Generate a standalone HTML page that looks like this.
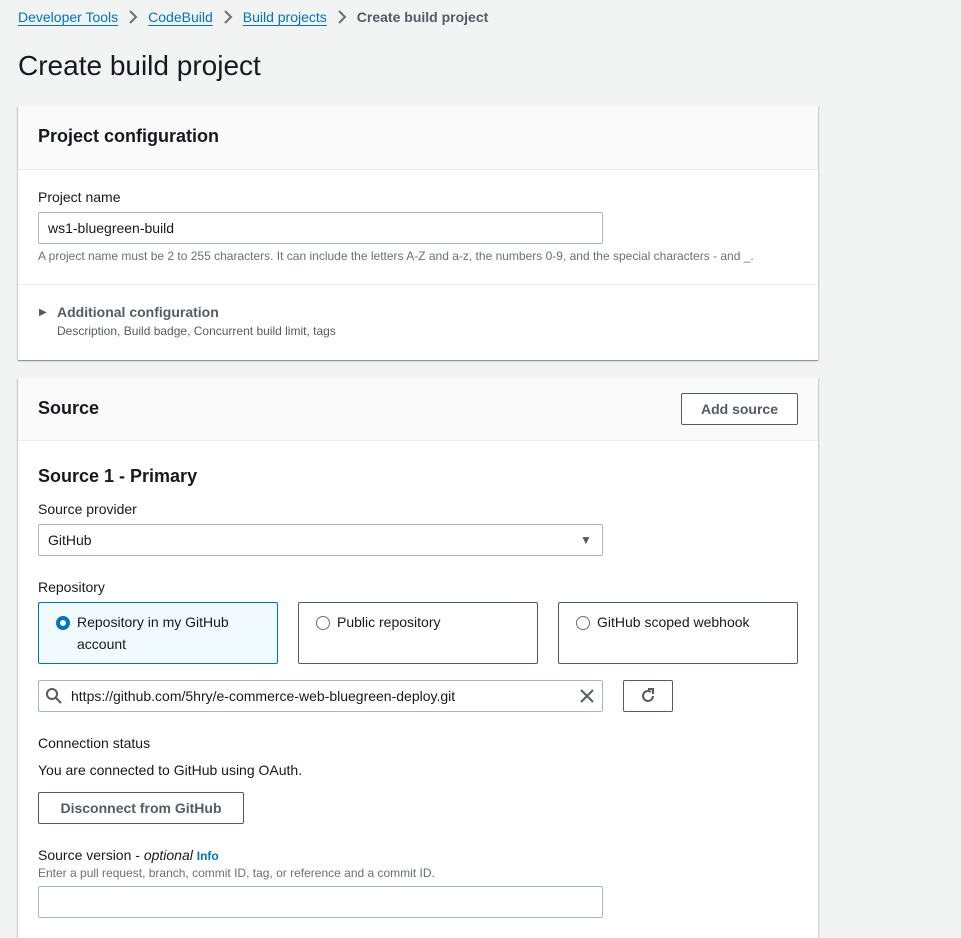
<!DOCTYPE html>
<html><head><style>
*{box-sizing:border-box;margin:0;padding:0}
body{width:961px;height:920px;overflow:hidden;background:#f2f3f3;font-family:"Liberation Sans",sans-serif;color:#16191f;position:relative;font-size:14px}
.a{position:absolute;white-space:nowrap}
.lnk{color:#0073bb;text-decoration:underline;text-underline-offset:3px}
.chev{display:inline-block;margin:0 10px;vertical-align:-2px}
.card{position:absolute;left:18px;width:800px;background:#fff;box-shadow:0 1px 1px 0 rgba(0,28,36,.3),1px 1px 1px 0 rgba(0,28,36,.15),-1px 1px 1px 0 rgba(0,28,36,.15)}
.hdr{position:absolute;left:0;top:0;width:800px;background:#fafafa;border-bottom:1px solid #eaeded}
.inp{position:absolute;border:1px solid #aab7b8;border-radius:2px;background:#fff;height:32px;font-size:14px;padding:7px 9px}
.btn{position:absolute;border:1px solid #545b64;border-radius:2px;background:#fff;font-weight:bold;color:#545b64;text-align:center;font-size:14px}
.tile{position:absolute;top:602px;width:240px;height:62px;border:1px solid #545b64;border-radius:2px;background:#fff}
.rad{position:absolute;left:17px;top:13px;width:14px;height:14px;border:1px solid #687078;border-radius:50%}
.tl{position:absolute;left:38px;top:8px;line-height:22px;font-size:14px}
.small{font-size:12px;color:#687078}
</style></head><body>
<div class="a" style="left:18px;top:9px;font-size:14px"><span class="lnk">Developer Tools</span><svg class="chev" width="10" height="14" viewBox="0 0 10 14"><path d="M2 1l6 6-6 6" fill="none" stroke="#687078" stroke-width="2"/></svg><span class="lnk">CodeBuild</span><svg class="chev" width="10" height="14" viewBox="0 0 10 14"><path d="M2 1l6 6-6 6" fill="none" stroke="#687078" stroke-width="2"/></svg><span class="lnk">Build projects</span><svg class="chev" width="10" height="14" viewBox="0 0 10 14"><path d="M2 1l6 6-6 6" fill="none" stroke="#687078" stroke-width="2"/></svg><b style="color:#545b64">Create build project</b></div>
<div class="a" style="left:18px;top:50px;font-size:28px">Create build project</div>

<div class="card" style="top:106px;height:254px">
<div class="hdr" style="height:64px"></div>
<div class="a" style="left:20px;top:20px;font-size:18px;font-weight:bold">Project configuration</div>
<div class="a" style="left:20px;top:83px">Project name</div>
<div class="inp" style="left:20px;top:106px;width:565px">ws1-bluegreen-build</div>
<div class="a small" style="left:20px;top:143px;font-size:12px">A project name must be 2 to 255 characters. It can include the letters A-Z and a-z, the numbers 0-9, and the special characters - and _.</div>
<div style="position:absolute;left:0;top:178px;width:800px;border-top:1px solid #eaeded"></div>
<div class="a" style="left:21px;top:201px;font-size:10px;color:#545b64">&#9654;</div>
<div class="a" style="left:39px;top:198px;font-weight:bold;color:#545b64">Additional configuration</div>
<div class="a" style="left:39px;top:218px;font-size:12px;color:#545b64">Description, Build badge, Concurrent build limit, tags</div>
</div>

<div class="card" style="top:378px;height:560px">
<div class="hdr" style="height:63px"></div>
<div class="a" style="left:20px;top:20px;font-size:18px;font-weight:bold">Source</div>
<div class="btn" style="left:663px;top:15px;width:117px;height:32px;line-height:30px">Add source</div>
</div>
<div class="a" style="left:38px;top:466px;font-size:18px;font-weight:bold">Source 1 - Primary</div>
<div class="a" style="left:38px;top:501px">Source provider</div>
<div class="inp" style="left:38px;top:524px;width:565px">GitHub</div>
<div class="a" style="left:580px;top:533px;font-size:12px;color:#545b64">&#9660;</div>
<div class="a" style="left:38px;top:579px">Repository</div>
<div class="tile" style="left:38px;border-color:#0073bb;background:#f1faff"><div class="rad" style="border:4px solid #0073bb;background:#fff"></div><div class="tl">Repository in my GitHub<br>account</div></div>
<div class="tile" style="left:298px"><div class="rad"></div><div class="tl">Public repository</div></div>
<div class="tile" style="left:558px"><div class="rad"></div><div class="tl">GitHub scoped webhook</div></div>
<div class="inp" style="left:38px;top:680px;width:565px;padding-left:32px">https://github.com/5hry/e-commerce-web-bluegreen-deploy.git</div>
<svg class="a" style="left:45px;top:687px" width="18" height="18" viewBox="0 0 18 18"><circle cx="7" cy="7" r="5" fill="none" stroke="#545b64" stroke-width="2"/><path d="M11 11l5 5" stroke="#545b64" stroke-width="2"/></svg>
<svg class="a" style="left:579px;top:688px" width="16" height="16" viewBox="0 0 16 16"><path d="M2 2l12 12M14 2L2 14" stroke="#545b64" stroke-width="2"/></svg>
<div class="btn" style="left:623px;top:680px;width:50px;height:32px"></div>
<svg class="a" style="left:639px;top:687px" width="18" height="18" viewBox="0 0 18 18"><path d="M14 9a5 5 0 1 1-2-4" fill="none" stroke="#545b64" stroke-width="2"/><path d="M9 2h5v5" fill="none" stroke="#545b64" stroke-width="2"/></svg>
<div class="a" style="left:38px;top:735px">Connection status</div>
<div class="a" style="left:38px;top:762px">You are connected to GitHub using OAuth.</div>
<div class="btn" style="left:38px;top:792px;width:206px;height:32px;line-height:30px">Disconnect from GitHub</div>
<div class="a" style="left:38px;top:847px">Source version - <i>optional</i> <span style="color:#0073bb;font-size:12px;font-weight:bold">Info</span></div>
<div class="a small" style="left:38px;top:866px;font-size:12px">Enter a pull request, branch, commit ID, tag, or reference and a commit ID.</div>
<div class="inp" style="left:38px;top:886px;width:565px"></div>
</body></html>
